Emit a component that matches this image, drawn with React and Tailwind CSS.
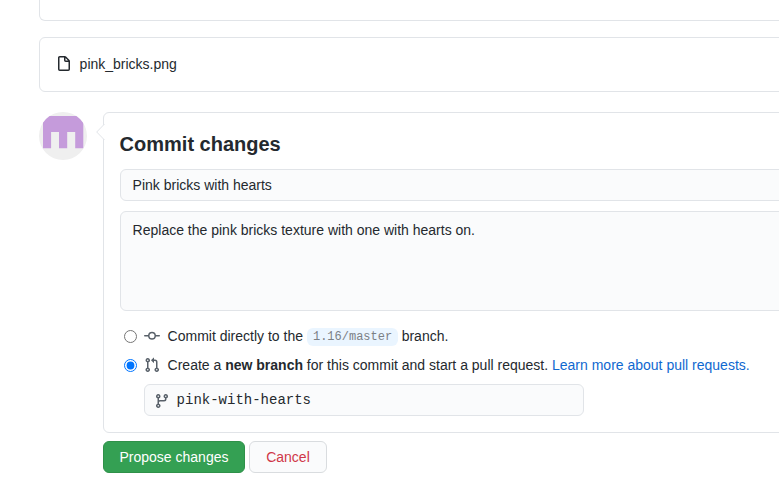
import React from "react";

const COMMIT =
  "M10.5 7.75a2.5 2.5 0 11-5 0 2.5 2.5 0 015 0zm1.43.75a4.002 4.002 0 01-7.86 0H.75a.75.75 0 110-1.5h3.32a4.001 4.001 0 017.86 0h3.32a.75.75 0 110 1.5h-3.32z";
const PULL_REQUEST =
  "M7.177 3.073L9.573.677A.25.25 0 0110 .854v4.792a.25.25 0 01-.427.177L7.177 3.427a.25.25 0 010-.354zM3.75 2.5a.75.75 0 100 1.5.75.75 0 000-1.5zm-2.25.75a2.25 2.25 0 113 2.122v5.256a2.251 2.251 0 11-1.5 0V5.372A2.25 2.25 0 011.5 3.25zM11 2.5h-1V4h1a1 1 0 011 1v5.628a2.251 2.251 0 101.5 0V5A2.5 2.5 0 0011 2.5zm1 10.25a.75.75 0 111.5 0 .75.75 0 01-1.5 0zM3.75 12a.75.75 0 100 1.5.75.75 0 000-1.5z";
const BRANCH =
  "M11.75 2.5a.75.75 0 100 1.5.75.75 0 000-1.5zm-2.25.75a2.25 2.25 0 113 2.122V6A2.5 2.5 0 0110 8.5H6a1 1 0 00-1 1v1.128a2.251 2.251 0 11-1.5 0V5.372a2.25 2.25 0 111.5 0v1.836A2.492 2.492 0 016 7h4a1 1 0 001-1v-.628A2.25 2.25 0 019.5 3.25zM4.25 12a.75.75 0 100 1.5.75.75 0 000-1.5zM3.5 3.25a.75.75 0 111.5 0 .75.75 0 01-1.5 0z";
const FILE =
  "M3.75 1.5a.25.25 0 00-.25.25v11.5c0 .138.112.25.25.25h8.5a.25.25 0 00.25-.25V6H9.75A1.75 1.75 0 018 4.25V1.5H3.75zm5.75.56v2.19c0 .138.112.25.25.25h2.19L9.5 2.06zM2 1.75C2 .784 2.784 0 3.75 0h5.086c.464 0 .909.184 1.237.513l3.414 3.414c.329.328.513.773.513 1.237v8.086A1.75 1.75 0 0112.25 15h-8.5A1.75 1.75 0 012 13.25V1.75z";

function Icon({ path, className }) {
  return (
    <svg
      width="16"
      height="16"
      viewBox="0 0 16 16"
      className={"block shrink-0 fill-current " + className}
    >
      <path fillRule="evenodd" d={path} />
    </svg>
  );
}

function Avatar() {
  return (
    <svg width="48" height="48" viewBox="0 0 48 48" className="block shrink-0">
      <defs>
        <clipPath id="avatar-circle">
          <circle cx="24" cy="24" r="24" />
        </clipPath>
      </defs>
      <g clipPath="url(#avatar-circle)">
        <rect width="48" height="48" fill="#efefef" />
        <path fill="#c59bdb" d="M4 4H44.300V36.200H36.200V20H28.200V36.200H20V20H12.100V36.200H4Z" />
      </g>
    </svg>
  );
}

export default function App() {
  return (
    <div className="h-[497px] w-[779px] overflow-hidden bg-white pl-[38.6px] font-['Liberation_Sans',Arial,sans-serif] text-sm leading-[21px] text-[#24292e]">
      <div className="w-[900px]">
        <div className="h-[21px] rounded-b-md border border-t-0 border-[#e1e4e8]" />

        <div className="mt-4 flex h-[55px] items-center rounded-md border border-[#e1e4e8] pl-4">
          <Icon path={FILE} className="mb-[2px]" />
          <span className="ml-2">pink_bricks.png</span>
        </div>

        <div className="mt-5 flex gap-4">
          <Avatar />
          <div className="grow">
            <div className="relative h-[321px] rounded-md border border-[#e1e4e8] px-4 pt-4">
              <svg width="9" height="16" viewBox="0 0 9 16" className="absolute top-[11px] -left-[8px]">
                <path d="M8.500 0L.7 8L8.500 16H9V0Z" fill="#fff" />
                <path d="M8.500 0L.7 8L8.500 16" fill="none" stroke="#e1e4e8" />
              </svg>
              <h3 className="text-xl leading-[30px] font-bold">Commit changes</h3>
              <div className="mt-[10px] h-8 rounded-md border border-[#e1e4e8] bg-[#fafbfc] px-3 leading-[30px]">
                Pink bricks with hearts
              </div>
              <div className="mt-[10px] h-[100px] rounded-md border border-[#e1e4e8] bg-[#fafbfc] px-3 pt-2">
                Replace the pink bricks texture with one with hearts on.
              </div>

              <div className="mt-[15px] flex h-[21px] items-center pl-1">
                <input type="radio" name="target" className="m-0 size-[13px] shrink-0" />
                <Icon path={COMMIT} className="mb-[2px] ml-[7px] text-[#586069]" />
                <span className="ml-2 whitespace-pre">Commit directly to the </span>
                <span className="mt-px ml-[0.5px] h-[18px] rounded-md bg-[#eaf5ff] px-[5.6px] pt-px font-['Liberation_Mono',monospace] text-xs leading-[17px] text-[#7b8085]">
                  1.16/master
                </span>
                <span className="whitespace-pre"> branch.</span>
              </div>
              <div className="mt-2 flex h-[21px] items-center pl-1">
                <input type="radio" name="target" defaultChecked className="m-0 size-[13px] shrink-0" />
                <Icon path={PULL_REQUEST} className="mb-[2px] ml-[7px] text-[#586069]" />
                <span className="ml-2 whitespace-pre">
                  Create a <b>new branch</b> for this commit and start a pull request.{" "}
                  <a className="text-[#1068d0]">Learn more about pull requests.</a>
                </span>
              </div>
              <div className="mt-2 ml-6 flex h-8 w-[440px] items-center rounded-md border border-[#e1e4e8] bg-[#fafbfc] pl-[9px] font-['Liberation_Mono',monospace]">
                <Icon path={BRANCH} className="mt-[2px] text-[#586069]" />
                <span className="ml-[7px]">pink-with-hearts</span>
              </div>
            </div>

            <div className="mt-2 flex gap-1">
              <button className="h-8 w-[142px] rounded-md border border-[#2f9149] bg-[#34a053] pl-[0.8px] text-white">
                Propose changes
              </button>
              <button className="h-8 w-[78px] rounded-md border border-[#d9dcdf] bg-[#fafbfc] pl-[0.8px] text-[#d03748]">
                Cancel
              </button>
            </div>
          </div>
        </div>
      </div>
    </div>
  );
}
